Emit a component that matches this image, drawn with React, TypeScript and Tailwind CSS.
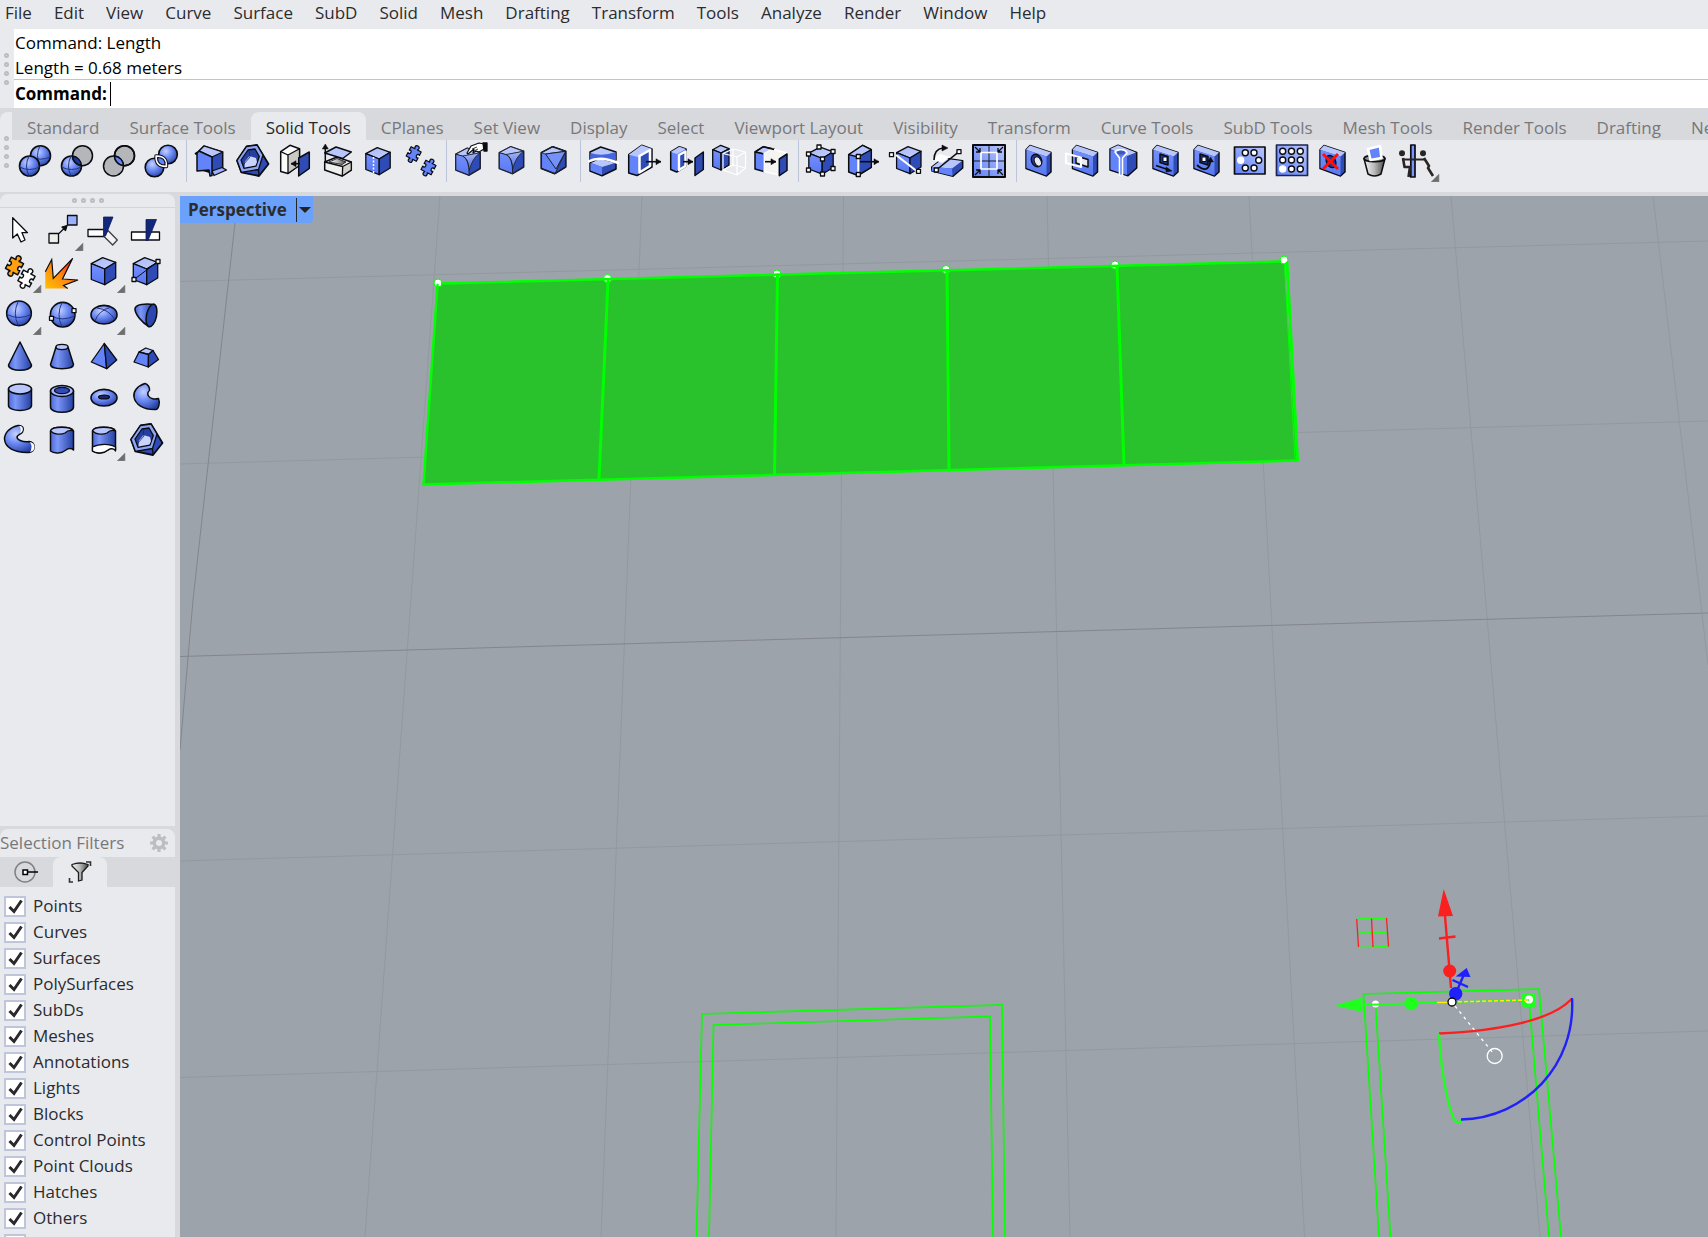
import { useState, type ReactNode } from "react";

const LIGHT = "#b9c6fb";
const MID = "#6383f8";
const DARK = "#2f4bb5";
const INK = "#0a0c12";

function Cell({ children, label, menu }: { children: ReactNode; label: string; menu?: boolean }) {
  return (
    <button type="button" title={label} aria-label={label} className="size-[42px] shrink-0">
      <svg viewBox="0 0 42 42" className="size-[42px]" fill="none" stroke={INK} strokeWidth="1.3" strokeLinejoin="round">
        {children}
        {menu && <path d="M41 34v8h-8z" fill="#6e6e6e" stroke="#8f8f8f" strokeWidth="0.6" />}
      </svg>
    </button>
  );
}

function Solid({ top, left, right }: { top: string; left: string; right: string }) {
  return (
    <>
      <polygon points={top} fill="url(#gTop)" />
      <polygon points={left} fill="url(#gLeft)" />
      <polygon points={right} fill={DARK} />
    </>
  );
}

function Cube({ x = 0, y = 0 }: { x?: number; y?: number }) {
  return (
    <g transform={`translate(${x} ${y})`}>
      <Solid
        top="7.3,12.7 18.7,6.7 31.7,11.3 20.7,18"
        left="7.3,12.7 20.7,18 20.7,33.7 7.3,28.5"
        right="20.7,18 31.7,11.3 31.7,27 20.7,33.7"
      />
    </g>
  );
}

function FilletCube({ x = 0, y = 0 }: { x?: number; y?: number }) {
  return (
    <g transform={`translate(${x} ${y})`} stroke="#1c202c">
      <polygon points="7.3,12.7 18.7,6.7 31.7,11.3 31.7,27 20.7,33.7 7.3,28.5" fill={DARK} strokeWidth="1.5" />
      <polygon points="7.3,12.7 18.7,6.7 31.7,11.3 14,15" fill={LIGHT} strokeWidth="0.8" />
      <path d="M14 14.5L31.700 11.300Q24 16 20.700 29Q20 17 14 14.500z" fill="url(#gFillet)" strokeWidth="0.800" />
      <path d="M7.300 12.700L14 14.500Q20.700 17 20.700 33.700L7.300 28.500z" fill="url(#gLeft)" strokeWidth="1" />
    </g>
  );
}

function Handle({ x, y }: { x: number; y: number }) {
  return <rect x={x - 2} y={y - 2} width="4" height="4" fill="#fff" strokeWidth="1.3" />;
}

function Ball({ x, y, r, lines = true }: { x: number; y: number; r: number; lines?: boolean }) {
  return (
    <g transform={`translate(${x} ${y})`}>
      <circle r={r} fill="url(#gBall)" strokeWidth="1.6" />
      {lines && (
        <g stroke="#22357f" strokeWidth="1">
          <path d={`M${-r} 1Q0 ${r * 0.6} ${r} 1`} />
          <path d={`M${-r * 0.05} ${-r}Q${-r * 0.55} 0 ${-r * 0.05} ${r}`} />
        </g>
      )}
    </g>
  );
}

function Puzzle({ x, y, fill, s = 1 }: { x: number; y: number; fill: string; s?: number }) {
  return (
    <path
      transform={`translate(${x} ${y}) rotate(28) scale(${s})`}
      d="M-6 -5.500h4.500c-3.500 -5.500 6.500 -5.500 3 0h4.500v4c-3.500 -2 -3.500 5 0 3v4h-4.500c3.500 5.500 -6.500 5.500 -3 0h-4.500v-4c3.500 2 3.500 -5 0 -3z"
      fill={fill}
      strokeWidth="1.3"
    />
  );
}

function Arrow({ x1, x2, y }: { x1: number; x2: number; y: number }) {
  const d = x2 > x1 ? -5 : 5;
  return (
    <>
      <path d={`M${x1} ${y}H${x2}`} strokeWidth="1.6" />
      <path d={`M${x2} ${y}l${d} -3v6z`} fill={INK} strokeWidth="0.5" />
    </>
  );
}

function Slab({ x = 0 }: { x?: number }) {
  return (
    <g transform={`translate(${x} 0)`}>
      <polygon points="6,9.700 10,5.500 31,12.500 31,32 26.500,36 6,28.500" fill={DARK} strokeWidth="1.5" />
      <polygon points="6,9.700 10,5.500 31,12.500 26.500,16.500" fill={LIGHT} stroke="none" />
      <polygon points="6.500,10 26.500,16.500 26.500,35.500 6.500,28" fill="url(#gLeft)" stroke="none" />
    </g>
  );
}

function HexPipe() {
  return (
    <>
      <polygon points="14.500,6.500 25,5 36.500,24 27,36 9.300,32.300 5,20.500" fill={DARK} strokeWidth="1.8" />
      <polygon points="14.500,6.500 25,5 31,15 26.500,29.500 9.300,32.300 5,20.500" fill="#8ea5f6" />
      <polygon points="16,10 23,9 27.300,16.500 24,26 12,28.300 9,20" fill="#263f9f" />
      <polygon points="13,21.500 17.500,16 24,18 25,22 23.500,25.500 12.500,27.500" fill="#c9d3fb" stroke="none" />
      <path d="M17 10l1 7-7 8" stroke="#16245f" strokeWidth="0.8" />
      <path d="M26.500 29.500L27 36" />
    </>
  );
}

function Gradients() {
  return (
    <svg width="0" height="0" className="absolute" aria-hidden="true">
      <defs>
        <radialGradient id="gBall" cx="0.38" cy="0.32" r="0.75">
          <stop offset="0" stopColor="#c6d1ff" />
          <stop offset="0.45" stopColor="#6e8cf5" />
          <stop offset="1" stopColor="#2440a4" />
        </radialGradient>
        <linearGradient id="gTop" x1="0" y1="0" x2="1" y2="1">
          <stop offset="0" stopColor="#a9b9f8" />
          <stop offset="1" stopColor="#c5d0fd" />
        </linearGradient>
        <linearGradient id="gLeft" x1="0" y1="0" x2="0" y2="1">
          <stop offset="0" stopColor="#7390fb" />
          <stop offset="1" stopColor="#5878f2" />
        </linearGradient>
        <linearGradient id="gFillet" x1="0" y1="0" x2="0" y2="1">
          <stop offset="0" stopColor="#a9b9f8" />
          <stop offset="1" stopColor="#4a68dc" />
        </linearGradient>
        <linearGradient id="gSide" x1="0" x2="1">
          <stop offset="0" stopColor="#4c69d8" />
          <stop offset="0.3" stopColor="#7c97f8" />
          <stop offset="1" stopColor="#2440a4" />
        </linearGradient>
        <linearGradient id="gFlat" x1="0" y1="1" x2="1" y2="0">
          <stop offset="0" stopColor="#5f80f7" />
          <stop offset="1" stopColor="#b9c6fb" />
        </linearGradient>
        <linearGradient id="gFire" x1="0" y1="1" x2="1" y2="0">
          <stop offset="0" stopColor="#ffc000" />
          <stop offset="0.45" stopColor="#ff8a10" />
          <stop offset="0.8" stopColor="#f8301c" />
        </linearGradient>
        <linearGradient id="gGray" x1="0" x2="1">
          <stop offset="0" stopColor="#f6f6f4" />
          <stop offset="0.5" stopColor="#b8b8b8" />
          <stop offset="1" stopColor="#4a4a4a" />
        </linearGradient>
      </defs>
    </svg>
  );
}

const toolbarGroups: ReactNode[][] = [
  [
    <Cell key="union" label="Boolean union">
      <Ball x={26.5} y={15.7} r={10} />
      <Ball x={15.5} y={26} r={10} />
    </Cell>,
    <Cell key="diff" label="Boolean difference">
      <Ball x={15.5} y={26} r={10} />
      <circle cx="26.500" cy="15.700" r="10" fill="#b5b6b9" strokeWidth="1.500" />
      <path d="M16.500 16A10 10 0 0 1 25.500 25.500A10 10 0 0 1 16.500 16z" fill="#1d3796" />
    </Cell>,
    <Cell key="inter" label="Boolean intersection">
      <circle cx="26.500" cy="15.700" r="10" fill="#b5b6b9" strokeWidth="1.500" />
      <circle cx="15.500" cy="26" r="10" fill="#b5b6b9" strokeWidth="1.500" />
      <circle cx="26.500" cy="15.700" r="10" strokeWidth="1.500" />
      <path d="M16.500 16A10 10 0 0 1 25.500 25.500A10 10 0 0 1 16.500 16z" fill={MID} />
    </Cell>,
    <Cell key="split" label="Boolean split">
      <Ball x={28} y={14.500} r={9.300} lines={false} />
      <Ball x={14.500} y={27.500} r={9.300} lines={false} />
      <path d="M16 16Q27 15.500 26.500 26.500Q15.500 27 16 16z" fill="#fff" stroke={INK} strokeWidth="3.400" />
      <path d="M16 16Q27 15.500 26.500 26.500Q15.500 27 16 16z" fill="#fff" stroke="#fff" strokeWidth="1.400" />
      <path d="M17.500 17.500Q25.500 17.500 25 25Q17.500 25 17.500 17.500z" fill={MID} strokeWidth="1.200" />
    </Cell>,
  ],
  [
    <Cell key="extract" label="Extract surface">
      <polygon points="9,11 14,6 32.700,12 32.700,29 22,33 9,29" fill={DARK} strokeWidth="1.500" />
      <polygon points="9,11 14,6 32.700,12 22,17" fill={LIGHT} />
      <polygon points="24,35.500 36.500,30 32,27.500 22,31" fill="#9db0fa" />
      <path d="M6 14L9 11L22 17V35.500L20 36L19 30L7 31V13z" fill={MID} strokeWidth="1.500" />
      <path d="M5 14l3-2" strokeWidth="2" />
    </Cell>,
    <Cell key="shell" label="Shell closed polysurface">
      <HexPipe />
    </Cell>,
    <Cell key="cap" label="Cap planar holes">
      <polygon points="6.700,11.700 16,5.300 25.500,8.700 25.500,25 14,33.500 6.700,31.500" fill="#fbfbfa" strokeWidth="1.500" />
      <polygon points="14,15 25.500,8.700 25.500,25.500 14,33.500" fill="#c9c8c3" />
      <path d="M6.700 11.700L14 15" />
      <polygon points="24.700,18 35.300,12 35.300,28.300 24.700,36" fill={DARK} strokeWidth="1.500" />
      <Arrow x1={26} x2={17} y={23.7} />
    </Cell>,
    <Cell key="plane" label="Extrude planar face">
      <polygon points="8.700,22 21,17 35.300,22 35.300,30 26,36 8.700,30" fill="#efefec" strokeWidth="1.500" />
      <polygon points="26.700,26.500 35.300,22 35.300,30 26.300,36" fill="#d2d1cc" />
      <polygon points="13,22 21,18.500 30,22 26,24.500" fill="url(#gGray)" strokeWidth="0.800" />
      <path d="M8.700 22l18 4.500" />
      <polygon points="8.700,13 20,7 35.300,12 26.700,18.500" fill={LIGHT} strokeWidth="1.500" />
      <path d="M9.300 23V8" strokeWidth="1.500" />
      <path d="M9.300 4l-3 5h6z" fill={INK} strokeWidth="0.500" />
    </Cell>,
    <Cell key="mergeface" label="Merge coplanar faces">
      <Cube x={0.5} y={1} />
      <path d="M15.500 17V33" stroke="#fff" strokeWidth="1.500" strokeDasharray="2 1.500" />
    </Cell>,
    <Cell key="explode" label="Convert to single surface">
      <Puzzle x={13.7} y={14} s={0.95} fill={MID} />
      <Puzzle x={28.500} y={27.500} s={0.95} fill={MID} />
    </Cell>,
  ],
  [
    <Cell key="filletedit" label="Edit fillet edge">
      <FilletCube x={-1.500} y={1.500} />
      <path d="M17 13l4-7 8-3 5 1v5l-5 3-3-1-3 2 1-4-6 5z" fill="#fff" strokeWidth="1.200" />
      <path d="M22 9l5-2M24 11l4-2" strokeWidth="0.800" />
      <path d="M33 3h4v8h-3z" fill={INK} />
    </Cell>,
    <Cell key="fillet" label="Fillet edge">
      <FilletCube />
    </Cell>,
    <Cell key="chamfer" label="Chamfer edge">
      <g stroke="#1c202c">
        <polygon points="7.300,12.700 18.700,6.700 31.700,11.300 31.700,27 20.700,33.700 7.300,28.500" fill={MID} />
        <polygon points="7.300,12.700 18.700,6.700 31.700,11.300 11.500,14" fill={LIGHT} strokeWidth="0.800" />
        <polygon points="31.700,11.300 31.700,27 21,33.700" fill={DARK} strokeWidth="0.800" />
        <polygon points="11.500,14 31.700,11.300 22,29" fill="#7591f8" strokeWidth="1" />
        <polygon points="7.300,12.700 18.700,6.700 31.700,11.300 31.700,27 20.700,33.700 7.300,28.500" strokeWidth="1.500" />
      </g>
    </Cell>,
  ],
  [
    <Cell key="wire" label="Wire cut">
      <polygon points="6,12 16.700,7 32,12 32,20 6,20" fill={LIGHT} strokeWidth="1.500" />
      <path d="M6.500 13Q18 17 31.500 12L32 21Q18 17 6 20z" fill="#4465dd" stroke="none" />
      <polygon points="6,23 16,19 32,23 32,29 18,35.700 6,31" fill={DARK} strokeWidth="1.500" />
      <polygon points="7,23 16,19 31,23 18,27" fill={LIGHT} stroke="none" />
      <polygon points="6.500,23 18,27 18,35 6.500,30.500" fill={MID} stroke="none" />
      <path d="M4 21.500Q17 15 35 23.500" stroke="#fff" strokeWidth="2.400" />
    </Cell>,
    <Cell key="moveface" label="Move face">
      <polygon points="2.700,14.700 15.700,5.300 26,9 26,27 11,35.500 2.700,33" fill={MID} strokeWidth="1.500" />
      <polygon points="2.700,14.700 15.700,5.300 26,9 12,17" fill={LIGHT} stroke="none" />
      <polygon points="13.500,16 24,10 24,26 13.500,32.500" fill={DARK} stroke="#fff" strokeWidth="2.500" />
      <Arrow x1={20} x2={35} y={21.7} />
    </Cell>,
    <Cell key="moveface2" label="Move face to boundary">
      <polygon points="2.700,12 11.300,6.700 18,9 18,26 8.700,32 2.700,29.500" fill={MID} strokeWidth="1.500" />
      <polygon points="2.700,12 11.300,6.700 18,9 9,14" fill={LIGHT} stroke="none" />
      <polygon points="11,15 17.500,11.500 17.500,26 11,30" fill={DARK} stroke="#fff" strokeWidth="2.400" />
      <Arrow x1={15} x2={25} y={21.7} />
      <polygon points="27,18 35.300,12 35.300,29.500 27,35.500" fill={DARK} strokeWidth="1.500" />
    </Cell>,
    <Cell key="copyface" label="Copy face">
      <Solid top="2.700,9.700 10.700,5.300 19,8.700 11,13" left="2.700,9.700 11,13 11,30 2.700,26.500" right="11,13 19,8.700 19,25 11,30" />
      <path d="M13 13.500L23 9L35.500 12V28L27 35L13 30zM13 13.500L27 17L35.500 12M27 17V35M23 9V25L13 30M23 25L35.500 28" stroke="#fff" strokeWidth="1.200" />
    </Cell>,
    <Cell key="extrudeface" label="Extrude face">
      <polygon points="3,12 11.300,6.700 22,9 12,14" fill={LIGHT} />
      <polygon points="3,12 12,14 12,31.500 3,29" fill={MID} strokeWidth="1.500" />
      <polygon points="12,13.500 20,9 35,13 27,18 27,35 12,31.500" fill="#f4f4f3" stroke="#fff" />
      <path d="M3 12L11.300 6.700L22 9.500" strokeWidth="1.500" />
      <polygon points="27.300,19 35,14 35,30.500 27.300,35.700" fill={DARK} strokeWidth="1.500" />
      <Arrow x1={13} x2={24} y={21.7} />
    </Cell>,
  ],
  [
    <Cell key="pts" label="Solid points on">
      <Cube x={-0.500} y={0.500} />
      <Handle x={17} y={7} />
      <Handle x={6.500} y={14} />
      <Handle x={31} y={11.500} />
      <Handle x={20.500} y={19} />
      <Handle x={6.500} y={30} />
      <Handle x={20.500} y={34} />
      <Handle x={31} y={28.500} />
    </Cell>,
    <Cell key="edge" label="Move edge">
      <polygon points="4.700,14.700 18.700,5.300 27.300,9.700 27.300,27.300 14,35.500 4.700,32" fill={MID} strokeWidth="1.500" />
      <polygon points="4.700,14.700 18.700,5.300 27.300,9.700 14.300,17" fill={LIGHT} />
      <polygon points="14.300,17 27.300,9.700 27.300,27.300 14.300,35" fill={DARK} />
      <path d="M14.300 17V34" stroke="#fff" strokeWidth="2.200" />
      <Arrow x1={16} x2={35} y={21.700} />
      <Handle x={14.300} y={16.500} />
      <Handle x={14.300} y={34.500} />
    </Cell>,
    <Cell key="rotedge" label="Split planar face">
      <Cube x={3.300} />
      <path d="M10 15L30 30.500" stroke="#fff" strokeWidth="2.200" />
      <Handle x={5.500} y={14.700} />
      <Handle x={32.500} y={31.300} />
    </Cell>,
    <Cell key="fold" label="Fold face">
      <polygon points="3.700,27 15.300,18 34.700,20.700 34.700,28 25,36.300 4,31" fill={DARK} strokeWidth="1.500" />
      <polygon points="4,27 15.300,18.500 34,21 24,28.500" fill={LIGHT} stroke="none" />
      <polygon points="4,27 24,28.500 24.500,36 4,31" fill={MID} stroke="none" />
      <polygon points="4,19 12,14 22,17 14,23" fill="#fff" stroke="none" />
      <path d="M8.300 30L31 11.700" strokeWidth="1.500" />
      <Handle x={8.300} y={30} />
      <Handle x={31} y={11.700} />
      <path d="M6 20Q6 9 15 8" strokeWidth="1.600" />
      <path d="M20 8l-6-3v6z" fill={INK} strokeWidth="0.500" />
    </Cell>,
    <Cell key="box" label="Bounding box">
      <rect x="3" y="5" width="32" height="32" fill="url(#gFlat)" strokeWidth="2" />
      <path d="M19 5v32M3 21h32" strokeWidth="0.900" />
      <rect x="11" y="12.500" width="16" height="16.500" stroke="#fff" strokeWidth="1.700" />
      <path d="M5 7l5 5M10 8v4h-4M33 7l-5 5M28 8v4h4M5 35l5-5M6 30h4v4M33 35l-5-5M32 30h-4v4" strokeWidth="1.300" />
    </Cell>,
  ],
  [
    <Cell key="hole" label="Make hole">
      <Slab />
      <ellipse cx="16.500" cy="20.500" rx="5" ry="6.500" transform="rotate(-25 16.500 20.500)" fill="#233b9a" />
      <ellipse cx="17.800" cy="21.500" rx="3.200" ry="5" transform="rotate(-25 17.800 21.500)" fill="#e9eaee" strokeWidth="1" />
    </Cell>,
    <Cell key="place" label="Place hole">
      <Slab x={4.500} />
      <polygon points="14,16 26,19.500 26,27 14,23" fill="#e9eaee" strokeWidth="1.500" />
      <path d="M4 13.500L19 17.500V27L4 23z" stroke="#fff" strokeWidth="2.200" />
    </Cell>,
    <Cell key="revolve" label="Revolved hole">
      <polygon points="6,9 14,5.300 32.700,12.500 32.700,28 24,35.700 6,30" fill={DARK} strokeWidth="1.500" />
      <polygon points="6,9 14,5.300 32,12.500 23,16" fill={LIGHT} stroke="none" />
      <polygon points="6.500,10 23,16 23,35 6.500,29.500" fill={MID} stroke="none" />
      <path d="M11 12C12 9 22 9 23 13L18.500 18V35.500H15.500V18z" fill="#5f7fee" stroke="#fff" strokeWidth="1.600" />
      <ellipse cx="17" cy="12.500" rx="4" ry="2" fill="#3c57bd" stroke="none" />
    </Cell>,
    <Cell key="movehole" label="Move hole">
      <Slab x={1} />
      <polygon points="14,14 22,16.500 22,25 14,22.500" fill="#1f348a" strokeWidth="1.500" />
      <rect x="17" y="17" width="4" height="4.500" fill="#fff" strokeWidth="1" />
      <path d="M10 25.500L23 30" strokeWidth="1.700" />
      <path d="M26 31l-6-4v5z" fill={INK} strokeWidth="0.500" />
    </Cell>,
    <Cell key="rothole" label="Rotate hole">
      <Slab />
      <polygon points="12,14 20,16.500 20,25 12,22.500" fill="#1f348a" strokeWidth="1.500" />
      <rect x="14" y="17" width="4" height="4.500" fill="#fff" strokeWidth="1" />
      <path d="M9 25Q20 35 22.500 21" strokeWidth="1.700" />
      <path d="M22.500 17l-3 5h6z" fill={INK} strokeWidth="0.500" />
    </Cell>,
    <Cell key="arrpolar" label="Array hole polar">
      <rect x="4.500" y="7" width="30.500" height="27" fill="url(#gFlat)" strokeWidth="1.700" />
      <g fill="#fff" strokeWidth="1.400">
        <circle cx="15.300" cy="12.700" r="3" />
        <circle cx="24" cy="12.700" r="3" />
        <circle cx="28.700" cy="20.300" r="3" />
        <circle cx="24" cy="28" r="3" />
        <circle cx="15.300" cy="28" r="3" />
        <circle cx="10.700" cy="20.300" r="3" stroke="#fff" />
      </g>
    </Cell>,
    <Cell key="arrgrid" label="Array hole">
      <rect x="4.500" y="5" width="31" height="30.500" fill="url(#gFlat)" strokeWidth="1.700" stroke="#1b2550" />
      <g fill="#fff" strokeWidth="1.400">
        <circle cx="10.700" cy="11.300" r="3" />
        <circle cx="19.500" cy="11.300" r="3" />
        <circle cx="28.300" cy="11.300" r="3" />
        <circle cx="10.700" cy="20" r="3" />
        <circle cx="19.500" cy="20" r="3" />
        <circle cx="28.300" cy="20" r="3" />
        <circle cx="10.700" cy="29" r="3" stroke="#fff" />
        <circle cx="19.500" cy="29" r="3" />
        <circle cx="28.300" cy="29" r="3" />
      </g>
    </Cell>,
    <Cell key="delhole" label="Delete hole">
      <Slab />
      <ellipse cx="17" cy="21.500" rx="4.500" ry="6.500" transform="rotate(-25 17 21.500)" fill="#1f348a" />
      <path d="M9 14L24 29M24 14L9 29" stroke="#fb1010" strokeWidth="3" />
    </Cell>,
    <Cell key="trash" label="Delete">
      <path d="M8 18.500L12 34Q18.500 38 25 34L29 18.500z" fill="url(#gGray)" strokeWidth="1.500" />
      <ellipse cx="18.500" cy="18.500" rx="10.500" ry="3.200" fill="#8b8b8b" strokeWidth="1.500" />
      <path d="M12 9l12-3 1.500 12-11 2z" fill={MID} stroke="#fff" strokeWidth="2.600" />
    </Cell>,
    <Cell key="align" label="Pull apart" menu>
      <rect x="12.800" y="5" width="4.200" height="32" fill="#7b95f8" strokeWidth="1.700" />
      <circle cx="4" cy="13.300" r="3" fill="#2a2524" stroke="none" />
      <circle cx="25" cy="13.300" r="3" fill="#2a2524" stroke="none" />
      <g stroke="#2a2524" strokeWidth="2">
        <path d="M4 19.500H27" />
        <path d="M5 18L6.500 27H12L10.500 37" strokeWidth="2.600" />
        <path d="M26 18L31 26L30 28L35 36" strokeWidth="2.600" />
      </g>
    </Cell>,
  ],
];

const sidebarIcons: ReactNode[] = [
  <Cell key="sel" label="Select">
    <path d="M12.700 8.700V29L17.300 25L21 33L25 31L22 23.700H27.500z" fill="#fff" />
  </Cell>,
  <Cell key="move" label="Move" menu>
    <rect x="7" y="24.500" width="9.500" height="9.500" fill="#efefe9" />
    <rect x="25.500" y="6.500" width="9.500" height="9.500" fill="#9bb0fa" />
    <path d="M17 24.500L23.500 18" />
    <path d="M25 16.500l-1.500 5-3.500-3.500z" fill={INK} />
  </Cell>,
  <Cell key="trim" label="Trim">
    <rect x="4" y="20.500" width="17" height="7" fill="#fff" />
    <polygon points="24,21.500 33.300,31 28.700,36 20,27.500" fill="#f4f4f6" stroke="#3b3d44" />
    <polygon points="19.500,8 29,8 21.500,27 19.500,27" fill="#12267a" stroke="#0d1c60" strokeWidth="0.800" />
  </Cell>,
  <Cell key="splt" label="Split">
    <rect x="5.500" y="23" width="28" height="8" fill="#fff" />
    <polygon points="20,10.500 30.500,10.500 22,31.500 20,31.500" fill="#12267a" stroke="#0d1c60" strokeWidth="0.800" />
  </Cell>,
  <Cell key="join" label="Join" menu>
    <Puzzle x={26.500} y={27.500} fill="#fff" s={1.100} />
    <Puzzle x={14.500} y={15} fill="#ffa010" s={1.150} />
  </Cell>,
  <Cell key="expl" label="Explode">
    <path d="M3.300 37.500V20.700L9.700 8.500L11.300 27.300L30.700 7.300L20.500 29L36 29L21.500 34.500L25.700 37.500z" fill="url(#gFire)" stroke="none" />
    <path d="M3.300 20.700L9.700 8.500L11.300 27.300L30.700 7.300L20.500 28L36 29L21.500 34.500L25.700 37.500" strokeWidth="1.200" strokeLinejoin="miter" />
  </Cell>,
  <Cell key="bx" label="Box" menu>
    <Cube />
  </Cell>,
  <Cell key="bxd" label="Box diagonal">
    <Cube />
    <path d="M8 28.500L32 10.500" strokeWidth="1" />
    <Handle x={8} y={28.500} />
    <Handle x={32} y={10.500} />
  </Cell>,
  <Cell key="sph" label="Sphere" menu>
    <Ball x={19} y={20.300} r={12.300} />
  </Cell>,
  <Cell key="sph2" label="Sphere by diameter">
    <Ball x={20.700} y={21.700} r={12.300} />
    <Handle x={9.500} y={25.300} />
    <Handle x={32} y={17.700} />
  </Cell>,
  <Cell key="ell" label="Ellipsoid" menu>
    <ellipse cx="20" cy="21.700" rx="13" ry="9.300" fill="url(#gBall)" strokeWidth="1.600" />
    <path d="M11 28Q14 18 27 14M13 15Q24 16 31 26.500" stroke="#22357f" strokeWidth="1" />
  </Cell>,
  <Cell key="par" label="Paraboloid">
    <path d="M28 11.500C20 10.500 9 11 9 16C9 21 16 30 23 33.500z" fill="url(#gSide)" strokeWidth="1.600" />
    <ellipse cx="25.500" cy="22.500" rx="5" ry="11.500" transform="rotate(12 25.500 22.500)" fill="#2b46ac" strokeWidth="1.500" />
  </Cell>,
  <Cell key="cone" label="Cone">
    <path d="M20 7L8.500 30C8.500 37 31.500 37 31.500 30z" fill="url(#gSide)" strokeWidth="1.500" />
  </Cell>,
  <Cell key="tcone" label="Truncated cone">
    <path d="M14 12L8.500 29.500C8.500 35 31.500 35 31.500 29.500L26 12z" fill="url(#gSide)" strokeWidth="1.500" />
    <ellipse cx="20" cy="12" rx="6" ry="2.600" fill={LIGHT} />
  </Cell>,
  <Cell key="pyr" label="Pyramid">
    <polygon points="20.300,8.500 7.300,27 22.700,33.700" fill={MID} />
    <polygon points="20.300,8.500 22.700,33.700 32.700,25" fill={DARK} />
  </Cell>,
  <Cell key="tpyr" label="Truncated pyramid">
    <polygon points="13,17 19.700,13 27,15.500 22.500,19.500" fill={LIGHT} />
    <polygon points="13,17 22.500,19.500 22.300,32 8,27" fill={MID} />
    <polygon points="22.500,19.500 27,15.500 32.500,24.500 22.300,32" fill={DARK} />
  </Cell>,
  <Cell key="cyl" label="Cylinder">
    <path d="M8.500 12V28.500C8.500 35 31.500 35 31.500 28.500V12z" fill="url(#gSide)" strokeWidth="1.500" />
    <ellipse cx="20" cy="12" rx="11.500" ry="5" fill={LIGHT} strokeWidth="1.500" />
  </Cell>,
  <Cell key="tube" label="Tube">
    <path d="M8.500 14V30C8.500 37 31.500 37 31.500 30V14z" fill="url(#gSide)" strokeWidth="1.500" />
    <ellipse cx="20" cy="14" rx="11.500" ry="5.500" fill="#a5b6fa" strokeWidth="1.500" />
    <ellipse cx="20" cy="13.500" rx="7.500" ry="3.200" fill="#2f4bb5" />
  </Cell>,
  <Cell key="torus" label="Torus">
    <ellipse cx="20" cy="20.700" rx="13" ry="8.300" fill="url(#gBall)" strokeWidth="1.600" />
    <ellipse cx="20" cy="20" rx="5.500" ry="1.900" fill="#15276f" />
  </Cell>,
  <Cell key="pipe" label="Pipe, flat caps">
    <path d="M19 6.500C11 9 7 15 8 20C9 27 17 33 30 32.500C33 32 34 25 32.500 21.500C29 22.500 24 22 22.500 19C21 17 22 14.500 23.500 13.500C24 11 22 7 19 6.500z" fill="url(#gBall)" strokeWidth="1.500" />
  </Cell>,
  <Cell key="pipe2" label="Pipe, round caps">
    <path d="M18 6.500C10 8 4.500 14 4.500 20C5 28 13 34 29 33.500C36 33 36 22.500 29 22.500C23 23.500 17 21 17 18C17.500 15.500 21 15.500 22.500 13C24.500 9 22 6 18 6.500z" fill="url(#gBall)" strokeWidth="1.500" />
    <path d="M19 7C24 6 24 13 20 14.500Q22 9 19 7z" fill="#fff" stroke="none" />
    <path d="M30 23C36 24 36 32 30 33Q33 28 30 23z" fill="#fff" stroke="none" />
  </Cell>,
  <Cell key="ext" label="Extrude closed curve">
    <path d="M8.500 12C10 7 29 7 31.500 12V31C30 29 26 29 24 31C20 34.500 12 35 8.500 32z" fill="url(#gSide)" strokeWidth="1.500" />
    <path d="M8.500 12C10 7 29 7 31.500 12C28 10.500 25 12 23 14C19 16 12 15.500 8.500 12z" fill={LIGHT} />
  </Cell>,
  <Cell key="ext2" label="Extrude surface" menu>
    <path d="M8.500 12C10 7 29 7 31.500 12V31C30 29 26 29 24 31C20 34.500 12 35 8.500 32z" fill="url(#gSide)" strokeWidth="1.500" />
    <path d="M8.500 12C10 7 29 7 31.500 12C28 10.500 25 12 23 14C19 16 12 15.500 8.500 12z" fill={LIGHT} />
    <path d="M8.500 28C15 24.500 26 24.500 31.500 28V32C30 29 26 29 24 31C20 34.500 12 35 8.500 32z" fill="#fff" />
  </Cell>,
  <Cell key="hex" label="Shell">
    <HexPipe />
  </Cell>,
];

function Grip() {
  return (
    <div className="flex w-3 shrink-0 flex-col items-center justify-center gap-1">
      {[0, 1, 2, 3].map((i) => (
        <span key={i} className="size-[5px] rounded-full border-2 border-[#bbbcc0]" />
      ))}
    </div>
  );
}

const menus = ["File", "Edit", "View", "Curve", "Surface", "SubD", "Solid", "Mesh", "Drafting", "Transform", "Tools", "Analyze", "Render", "Window", "Help"];

const tabs = ["Standard", "Surface Tools", "Solid Tools", "CPlanes", "Set View", "Display", "Select", "Viewport Layout", "Visibility", "Transform", "Curve Tools", "SubD Tools", "Mesh Tools", "Render Tools", "Drafting", "New in V8"];

const filters = ["Points", "Curves", "Surfaces", "PolySurfaces", "SubDs", "Meshes", "Annotations", "Lights", "Blocks", "Control Points", "Point Clouds", "Hatches", "Others", "Sub-objects"];

function FilterRow({ label }: { label: string }) {
  const [on, setOn] = useState(true);
  return (
    <label className="flex h-[26px] items-center gap-[7px] pl-1">
      <span className="relative flex">
        <input
          type="checkbox"
          checked={on}
          onChange={() => setOn(!on)}
          className="h-[21px] w-[22px] appearance-none border-2 border-[#bfc6dc] bg-white"
        />
        {on && (
          <svg viewBox="0 0 22 21" className="pointer-events-none absolute inset-0 h-[21px] w-[22px]" fill="none" stroke="#2a2a2e" strokeWidth="3">
            <path d="M5.500 11l4.500 4.500L17.500 4.500" />
          </svg>
        )}
      </span>
      <span className="pb-px text-[17px] leading-5 whitespace-nowrap">{label}</span>
    </label>
  );
}

function Sidebar() {
  return (
    <aside className="flex w-[175px] shrink-0 flex-col overflow-hidden">
      <div className="flex min-h-0 flex-1 flex-col rounded-t-lg bg-[#e9eaee]">
        <div className="flex h-[14px] items-center justify-center gap-1 border-b border-[#d3d5da]">
          {[0, 1, 2, 3].map((i) => (
            <span key={i} className="size-[5px] rounded-full border-2 border-[#bbbcc0]" />
          ))}
        </div>
        <div className="grid grid-cols-[repeat(4,42px)] pt-px">{sidebarIcons}</div>
      </div>
      <section className="mt-[3px] h-[408px] shrink-0 overflow-hidden rounded-t-lg bg-[#e9eaee]">
        <header className="flex h-7 items-center justify-between pr-[6px]">
          <h2 className="text-[17px] leading-6 whitespace-nowrap text-[#77787b]">Selection Filters</h2>
          <button type="button" aria-label="Panel options">
            <svg viewBox="0 0 20 20" className="size-5" fill="none" stroke="#bdbec1">
              <circle cx="10" cy="10" r="4.700" strokeWidth="3.400" />
              <g strokeWidth="3.200">
                <path d="M10 1v3.500M10 15.500V19M1 10h3.500M15.500 10H19M3.600 3.600l2.500 2.500M13.900 13.900l2.500 2.500M16.400 3.600l-2.500 2.500M6.100 13.900l-2.500 2.500" />
              </g>
            </svg>
          </button>
        </header>
        <div className="flex h-[30px] bg-[#d8d9dd]">
          <button type="button" aria-label="Object snaps" className="flex w-[53px] items-center justify-center">
            <svg viewBox="0 0 28 24" className="h-6 w-7" fill="none">
              <circle cx="12" cy="12" r="10" stroke="#808184" strokeWidth="1.500" />
              <path d="M12 12H25" stroke="#000" strokeWidth="1.500" />
              <rect x="10" y="10" width="4.500" height="4.500" fill="#fff" stroke="#000" strokeWidth="1.500" />
            </svg>
          </button>
          <button type="button" aria-label="Selection filters" className="flex w-[54px] items-center justify-center rounded-t-lg bg-[#e9eaee]">
            <svg viewBox="0 0 24 24" className="size-6" fill="none">
              <path d="M4 4.500Q12 1.500 20 4.500V6L14 12.500V20L10.500 21V12.500L4 6z" fill="url(#gGray)" stroke="#1b1b1b" strokeWidth="1.300" />
              <path d="M18 2h4.500v4M1.500 18v4H5" stroke="#333" strokeWidth="1.600" />
            </svg>
          </button>
        </div>
        <div className="pt-[6px]">
          {filters.map((f) => (
            <FilterRow key={f} label={f} />
          ))}
        </div>
      </section>
    </aside>
  );
}

function Scene() {
  return (
    <svg viewBox="180 196 1528 1041" preserveAspectRatio="xMinYMin slice" className="absolute inset-0 size-full" fill="none">
      <g stroke="#92999f" strokeWidth="1">
        <path d="M440 196L365 1237M642 196L601 1237M843.500 196L836 1237M1047 196L1070 1237M1249 196L1304.500 1237M1451 196L1540 1237M1653 196L1708 665" />
        <path d="M180 281.500L1708 241M180 464L1708 421M180 861L1708 816M180 1077.500L1708 1031" />
      </g>
      <path d="M238 196L193 600L180 750M180 656.500L1708 613" stroke="#83868c" />

      <polygon points="438,283 1284,261 1297,460.500 423.500,484.500" fill="#2ac22c" />
      <g fill="#fff" stroke="#00ff00">
        <circle cx="438" cy="283" r="4" />
        <circle cx="607.500" cy="278.500" r="4" />
        <circle cx="777" cy="274" r="4" />
        <circle cx="946" cy="269.500" r="4" />
        <circle cx="1115" cy="265" r="4" />
        <circle cx="1284" cy="260" r="4" />
      </g>
      <g stroke="#00ff00" strokeWidth="3" strokeLinecap="round">
        <path d="M442 283.500L1280 261.500M437.500 285L423.500 484.500L1297 460.500" strokeWidth="2.500" />
        <path d="M608 281L599 479.500M777.500 275L774.500 474.500M947 271L949 470M1117 267L1124 465" />
        <path d="M1287 263L1297.500 460" />
        <path d="M1284.500 264L1295 459" strokeWidth="1" />
      </g>

      <g stroke="#08ff04" strokeWidth="1.700">
        <path d="M696.500 1237L702 1014L1002 1005L1005 1237M709 1237L713.500 1025L990 1016.500L993 1237" />
        <path d="M1379 1237L1363.500 994L1539 989L1561 1237" />
        <path d="M1390.500 1237L1375.500 1004M1529 1000L1549 1237" />
      </g>

      <g stroke="#22ff14" strokeWidth="1.300">
        <path d="M1357 919L1387 918M1358 933L1388 932.500M1358.500 947.500L1388.500 946.500" />
        <path d="M1356.700 919L1358.500 947M1371.500 918.500L1373 947M1386.500 918L1388.500 946.500" stroke="#fb2020" />
      </g>

      <circle cx="1375.500" cy="1004" r="3.500" fill="#fff" />
      <path d="M1362 1005L1452 1002" stroke="#1eff1e" strokeWidth="2" />
      <path d="M1334 1005.500L1362.500 997.500V1012z" fill="#1eff1e" />
      <circle cx="1411" cy="1003.500" r="6.700" fill="#1eff1e" />
      <rect x="1522" y="993" width="14" height="14" rx="2" fill="#1eff1e" />
      <circle cx="1529" cy="999.500" r="4" fill="#fff" />
      <path d="M1437 1002.500L1529 1000" stroke="#1eff1e" strokeWidth="1.500" />
      <path d="M1437 1002.500H1452" stroke="#ffee00" strokeWidth="1.500" />
      <path d="M1452 1002L1529 1000" stroke="#ffee00" strokeWidth="1.500" strokeDasharray="4 2" />

      <g stroke="#fb2020" strokeWidth="2.400">
        <path d="M1445 916L1451 988M1439 938.500L1455.500 936.500" />
        <path d="M1443.700 889L1438 916.500L1453 916z" fill="#fb2020" stroke="none" />
        <circle cx="1449.700" cy="971" r="6.500" fill="#fb2020" stroke="none" />
      </g>
      <g stroke="#2020fb" strokeWidth="2.400">
        <path d="M1456 993L1465 972M1452.500 980L1468 987" />
        <path d="M1466.700 968L1455.700 976.500L1470.500 977z" fill="#2020fb" stroke="none" />
        <circle cx="1455.700" cy="993.700" r="6.700" fill="#2020fb" stroke="none" />
      </g>
      <path d="M1455 1006L1493 1053" stroke="#fff" strokeWidth="1.300" strokeDasharray="3 4" />
      <circle cx="1494.700" cy="1056" r="7.500" stroke="#fff" strokeWidth="1.300" />
      <circle cx="1452" cy="1002" r="4" fill="#fff" stroke="#000" strokeWidth="1.300" />
      <path d="M1439 1033.500C1500 1031 1552 1020 1571.500 999" stroke="#fb2020" strokeWidth="2.400" />
      <path d="M1439 1034C1441 1070 1447 1102 1453 1117Q1457 1126 1462 1120" stroke="#1eff1e" strokeWidth="2.400" />
      <path d="M1572 998C1576 1065 1525 1118 1461 1119.500" stroke="#2020fb" strokeWidth="2.400" />
    </svg>
  );
}

export default function App() {
  const [tab, setTab] = useState("Solid Tools");
  return (
    <div className="flex h-screen flex-col overflow-hidden bg-[#d8d9dd] font-['Open_Sans',sans-serif] text-[17px] text-[#2b2c2f]">
      <Gradients />
      <nav className="flex h-[29px] shrink-0 items-center gap-[22px] bg-[#e9eaee] pb-1 pl-[5px] leading-6">
        {menus.map((m) => (
          <button key={m} type="button">
            {m}
          </button>
        ))}
      </nav>

      <section className="flex h-[79px] shrink-0 bg-[#e9eaee]">
        <Grip />
        <div className="ml-[2px] flex flex-1 flex-col bg-white text-black">
          <div className="h-[51px] border-b border-[#bcc4d8] pt-px pl-px leading-[25px]">
            <p>Command: Length</p>
            <p>Length = 0.68 meters</p>
          </div>
          <label className="flex flex-1 items-center gap-[3px] pl-px">
            <span className="font-bold">Command:</span>
            <span className="h-6 w-px bg-black" />
            <input type="text" aria-label="Command" className="min-w-0 flex-1 outline-none" />
          </label>
        </div>
      </section>

      <section className="mt-1 flex h-20 shrink-0">
        <div className="flex rounded-tl-lg bg-[#e9eaee]">
          <Grip />
        </div>
        <div className="flex min-w-0 flex-1 flex-col">
          <div className="flex h-7 overflow-hidden">
            {tabs.map((t) => (
              <button
                key={t}
                type="button"
                onClick={() => setTab(t)}
                className={
                  t === tab
                    ? "shrink-0 rounded-t-lg bg-[#e9eaee] px-[15px] pt-1 leading-6 whitespace-nowrap text-[#26272a]"
                    : "shrink-0 px-[15px] pt-1 leading-6 whitespace-nowrap text-[#77787b]"
                }
              >
                {t}
              </button>
            ))}
          </div>
          <div className="flex flex-1 overflow-hidden bg-[#e9eaee] pl-[2px]">
            {toolbarGroups.map((group, i) => (
              <div key={i} className="flex">
                {i > 0 && <div className="mr-[3px] ml-1 h-[42px] w-px bg-[#bcc4d8]" />}
                {group}
              </div>
            ))}
          </div>
        </div>
      </section>

      <div className="flex min-h-0 flex-1">
        <div className="flex pt-[2px]">
          <Sidebar />
        </div>
        <main className="relative mt-1 ml-[5px] min-w-0 flex-1 overflow-hidden bg-[#9da3aa]">
          <Scene />
          <div className="relative flex h-[27px] w-[133px] items-center justify-between rounded-br-sm bg-[#6aa1fb] pl-2">
            <button type="button" className="font-bold">
              Perspective
            </button>
            <button type="button" aria-label="Viewport menu" className="flex h-6 w-[17px] items-center justify-center border-l border-[#26272a]">
              <svg viewBox="0 0 12 6" className="h-[6px] w-3">
                <path d="M0 0H12L6 6z" fill="#222" />
              </svg>
            </button>
          </div>
        </main>
      </div>
    </div>
  );
}
